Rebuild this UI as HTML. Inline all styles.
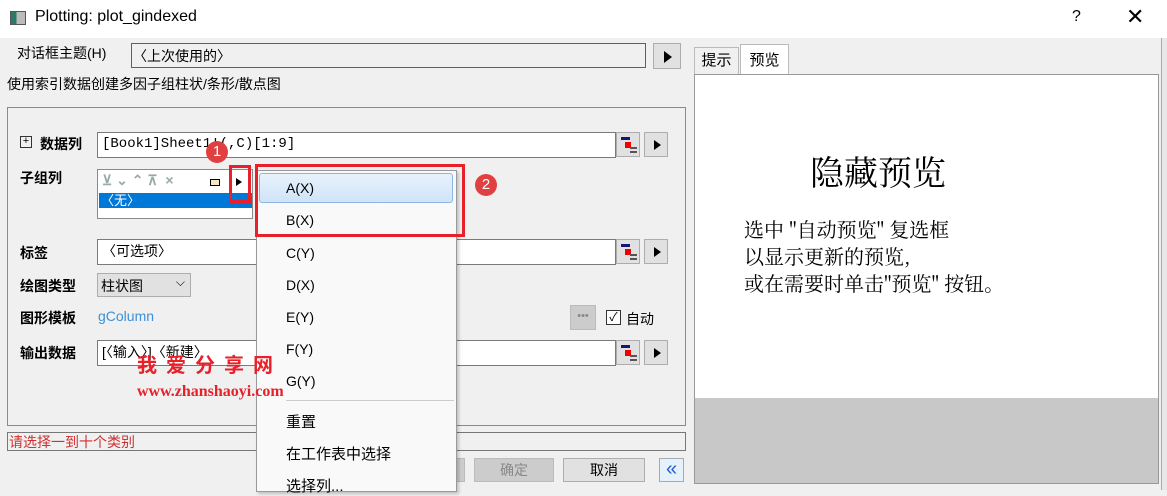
<!DOCTYPE html>
<html><head><meta charset="utf-8"><style>
*{margin:0;padding:0;box-sizing:border-box}
body{width:1167px;height:490px;background:#f0f0f0;position:relative;overflow:hidden;font-family:"Liberation Sans","Noto Sans CJK SC",sans-serif;font-size:14px;color:#000}
.a{position:absolute}
.inp{position:absolute;background:#fff;border:1px solid #7a7a7a;box-shadow:inset 0 0 0 1px #fff;font-family:"Liberation Mono","Noto Sans CJK SC",monospace;font-size:14px;padding:2px 4px;line-height:18px}
.btn{position:absolute;background:#e1e1e1;border:1px solid #adadad}
.tri{position:absolute;width:0;height:0;border-left:7px solid #000;border-top:5px solid transparent;border-bottom:5px solid transparent}
.lbl{position:absolute;font-weight:bold;font-size:14px}
.mi{position:absolute;left:286px;font-size:14px}
.ic{position:absolute;width:24px;height:25px;background:#e1e1e1;border:1px solid #adadad}
</style></head><body>
<div class="a" style="left:0;top:0;width:1167px;height:38px;background:#fff"></div>
<div class="a" style="left:10px;top:11px;width:16px;height:14px;border:1px solid #555;background:linear-gradient(90deg,#2a7a6a 40%,#bbb 40%)"></div>
<div class="a" style="left:35px;top:8px;font-size:16px">Plotting: plot_gindexed</div>
<div class="a" style="left:1072px;top:8px;font-size:16px">?</div>
<div class="a" style="left:1126px;top:4px;font-size:22px">✕</div>

<div class="a" style="left:17px;top:43px;font-size:14px">对话框主题(H)</div>
<div class="a" style="left:131px;top:43px;width:515px;height:25px;border:1px solid #0078d7;background:#f0f0f0"></div>
<div class="a" style="left:133px;top:46px;font-size:14px">〈上次使用的〉</div>
<div class="btn" style="left:653px;top:43px;width:28px;height:26px"><div class="tri" style="left:10px;top:7px;border-left-width:8px;border-top-width:6px;border-bottom-width:6px"></div></div>
<div class="a" style="left:7px;top:74px;font-size:14px">使用索引数据创建多因子组柱状/条形/散点图</div>

<div class="a" style="left:7px;top:107px;width:679px;height:319px;border:1px solid #8a8a8a"></div>
<div class="a" style="left:20px;top:136px;width:12px;height:12px;border:1px solid #333;font-size:11px;line-height:9px;text-align:center">+</div>
<div class="lbl" style="left:40px;top:134px">数据列</div>
<div class="inp" style="left:97px;top:132px;width:519px;height:26px">[Book1]Sheet1!(,C)[1:9]</div>
<div class="ic" style="left:616px;top:132px"><div class="a" style="left:4px;top:4px;width:9px;height:3px;background:#14147a"></div><div class="a" style="left:8px;top:9px;width:6px;height:6px;background:#e00"></div><div class="a" style="left:13px;top:14px;width:7px;height:6px;border-top:2px solid #555;border-bottom:2px solid #555"></div></div>
<div class="btn" style="left:644px;top:132px;width:24px;height:25px"><div class="tri" style="left:9px;top:7px"></div></div>

<div class="lbl" style="left:20px;top:168px">子组列</div>
<div class="a" style="left:97px;top:169px;width:156px;height:50px;border:1px solid #8a8a8a;background:#fff"></div>
<div class="a" style="left:102px;top:172px;font-size:14px;color:#9aa;font-weight:bold">⊻ ⌄ ⌃ ⊼ &nbsp;× </div>
<div class="a" style="left:210px;top:179px;width:10px;height:7px;border:1.5px solid #000;background:#f5e6c8"></div>
<div class="tri" style="left:236px;top:178px;border-left-width:6px;border-top-width:4px;border-bottom-width:4px"></div>
<div class="a" style="left:99px;top:193px;width:153px;height:15px;background:#0078d7;color:#fff;font-size:13px;line-height:15px;padding-left:2px">〈无〉</div>

<div class="lbl" style="left:20px;top:243px">标签</div>
<div class="inp" style="left:97px;top:239px;width:519px;height:26px;font-family:'Liberation Sans','Noto Sans CJK SC',sans-serif">〈可选项〉</div>
<div class="ic" style="left:616px;top:239px"><div class="a" style="left:4px;top:4px;width:9px;height:3px;background:#14147a"></div><div class="a" style="left:8px;top:9px;width:6px;height:6px;background:#e00"></div><div class="a" style="left:13px;top:14px;width:7px;height:6px;border-top:2px solid #555;border-bottom:2px solid #555"></div></div>
<div class="btn" style="left:644px;top:239px;width:24px;height:25px"><div class="tri" style="left:9px;top:7px"></div></div>

<div class="lbl" style="left:20px;top:276px">绘图类型</div>
<div class="a" style="left:97px;top:273px;width:94px;height:24px;background:#e1e1e1;border:1px solid #adadad;padding:2px 3px;font-size:14px">柱状图<span style="position:absolute;right:5px;top:1px;font-size:12px">⌵</span></div>

<div class="lbl" style="left:20px;top:308px">图形模板</div>
<div class="a" style="left:98px;top:308px;color:#3c8fd8;font-size:14px">gColumn</div>
<div class="a" style="left:570px;top:305px;width:26px;height:25px;background:#ccc;border:1px solid #bbb;color:#888;text-align:center;font-size:11px;line-height:20px">•••</div>
<div class="a" style="left:606px;top:310px;width:15px;height:15px;border:1px solid #333;background:#fff;font-size:12px;line-height:13px;text-align:center">✓</div>
<div class="a" style="left:626px;top:309px;font-size:14px">自动</div>

<div class="lbl" style="left:20px;top:343px">输出数据</div>
<div class="inp" style="left:97px;top:340px;width:519px;height:26px;font-family:'Liberation Sans','Noto Sans CJK SC',sans-serif">[〈输入〉]〈新建〉</div>
<div class="ic" style="left:616px;top:340px"><div class="a" style="left:4px;top:4px;width:9px;height:3px;background:#14147a"></div><div class="a" style="left:8px;top:9px;width:6px;height:6px;background:#e00"></div><div class="a" style="left:13px;top:14px;width:7px;height:6px;border-top:2px solid #555;border-bottom:2px solid #555"></div></div>
<div class="btn" style="left:644px;top:340px;width:24px;height:25px"><div class="tri" style="left:9px;top:7px"></div></div>

<div class="a" style="left:7px;top:432px;width:679px;height:19px;border:1px solid #777"></div>
<div class="a" style="left:9px;top:432px;color:#d03030;font-size:14px">请选择一到十个类别</div>

<div class="a" style="left:440px;top:458px;width:25px;height:24px;background:#ccc;border:1px solid #bbb"></div>
<div class="a" style="left:474px;top:458px;width:80px;height:24px;background:#ccc;border:1px solid #bbb;color:#888;text-align:center;line-height:22px">确定</div>
<div class="a" style="left:563px;top:458px;width:82px;height:24px;background:#e1e1e1;border:1px solid #adadad;text-align:center;line-height:22px">取消</div>
<div class="a" style="left:659px;top:458px;width:25px;height:24px;background:#e5f1fb;border:1px solid #aaa;color:#2060d0;font-size:20px;line-height:20px;text-align:center">«</div>

<!-- right -->
<div class="a" style="left:694px;top:47px;width:45px;height:27px;border:1px solid #bbb;border-bottom:none;text-align:center;line-height:26px;font-size:15px">提示</div>
<div class="a" style="left:740px;top:44px;width:49px;height:31px;border:1px solid #bbb;border-bottom:none;background:#fff;text-align:center;line-height:32px;font-size:15px">预览</div>
<div class="a" style="left:694px;top:74px;width:465px;height:410px;border:1px solid #999;background:#fff"></div>
<div class="a" style="left:695px;top:398px;width:463px;height:85px;background:#c8c8c8"></div>
<div class="a" style="left:810px;top:146px;font-size:34px;font-family:'Noto Serif CJK SC',serif">隐藏预览</div>
<div class="a" style="left:744px;top:215px;font-size:20px;line-height:27px;font-family:'Noto Serif CJK SC',serif">选中 "自动预览" 复选框<br>以显示更新的预览,<br>或在需要时单击"预览" 按钮。</div>
<div class="a" style="left:1161px;top:38px;width:6px;height:452px;background:#e8e8e8;border-left:1px solid #aaa"></div>

<!-- menu -->
<div class="a" style="left:256px;top:170px;width:201px;height:322px;background:#f9f9f9;border:1px solid #999;box-shadow:2px 2px 3px rgba(0,0,0,.2)"></div>
<div class="a" style="left:259px;top:173px;width:194px;height:30px;background:linear-gradient(#e8f2fc,#cfe4f8);border:1px solid #8cb6e2;border-radius:3px"></div>
<div class="mi" style="top:180px">A(X)</div>
<div class="mi" style="top:212px">B(X)</div>
<div class="mi" style="top:245px">C(Y)</div>
<div class="mi" style="top:277px">D(X)</div>
<div class="mi" style="top:309px">E(Y)</div>
<div class="mi" style="top:341px">F(Y)</div>
<div class="mi" style="top:373px">G(Y)</div>
<div class="a" style="left:286px;top:400px;width:168px;height:1px;background:#ccc"></div>
<div class="mi" style="top:411px;font-size:15px">重置</div>
<div class="mi" style="top:443px;font-size:15px">在工作表中选择</div>
<div class="mi" style="top:475px;font-size:15px">选择列...</div>

<div class="a" style="left:137px;top:349px;color:#e8202a;font-weight:bold;font-size:20px;letter-spacing:9px">我爱分享网</div>
<div class="a" style="left:137px;top:383px;color:#e8202a;font-weight:bold;font-size:16px;font-family:'Liberation Serif',serif">www.zhanshaoyi.com</div>

<!-- annotations -->
<div class="a" style="left:229px;top:165px;width:22px;height:38px;border:3px solid #e8202a"></div>
<div class="a" style="left:255px;top:164px;width:210px;height:73px;border:3px solid #e8202a"></div>
<div class="a" style="left:206px;top:141px;width:22px;height:22px;border-radius:50%;background:#e04040;color:#fff;font-size:15px;text-align:center;line-height:22px">1</div>
<div class="a" style="left:475px;top:174px;width:22px;height:22px;border-radius:50%;background:#e04040;color:#fff;font-size:15px;text-align:center;line-height:22px">2</div>
</body></html>
